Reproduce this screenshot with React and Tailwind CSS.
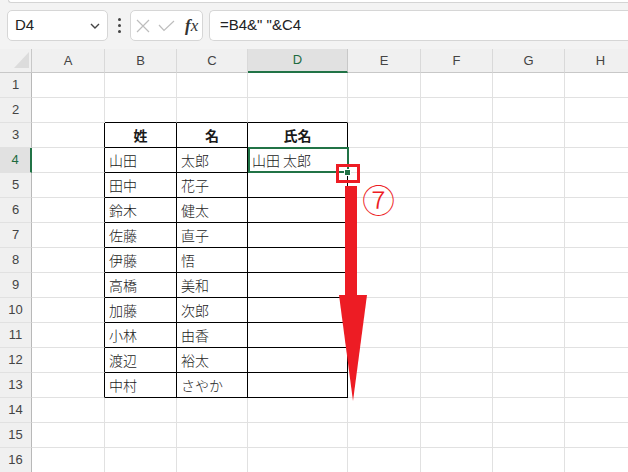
import React from 'react';

const cols = ['A', 'B', 'C', 'D', 'E', 'F', 'G', 'H'];
const data = {
  3: ['姓', '名', '氏名'],
  4: ['山田', '太郎', '山田 太郎'],
  5: ['田中', '花子', ''],
  6: ['鈴木', '健太', ''],
  7: ['佐藤', '直子', ''],
  8: ['伊藤', '悟', ''],
  9: ['高橋', '美和', ''],
  10: ['加藤', '次郎', ''],
  11: ['小林', '由香', ''],
  12: ['渡辺', '裕太', ''],
  13: ['中村', 'さやか', ''],
};

const jp = "font-['Noto_Sans_CJK_JP',sans-serif]";
const ui = "font-['Liberation_Sans','Noto_Sans',sans-serif]";

function Cell({ row, ci }) {
  const inTable = row >= 3 && row <= 13 && ci >= 1 && ci <= 3;
  const leftOfTable = row >= 3 && row <= 13 && ci === 0;
  const aboveTable = row === 2 && ci >= 1 && ci <= 3;
  const r = inTable || leftOfTable ? 'border-r-black' : 'border-r-[#e1e1e1]';
  const b = inTable || aboveTable ? 'border-b-black' : 'border-b-[#e1e1e1]';
  const text = inTable ? data[row][ci - 1] : '';
  const head = row === 3 && inTable;
  return (
    <div
      className={`h-[25px] border-r border-b ${r} ${b} flex items-center ${jp} text-[14px] text-[#1a1a1a] ${
        head ? 'justify-center font-bold' : 'pl-[4px] font-light'
      } overflow-hidden whitespace-nowrap`}
    >
      {text}
    </div>
  );
}

export default function App() {
  const rows = Array.from({ length: 16 }, (_, i) => i + 1);
  return (
    <div className="w-[628px] h-[472px] overflow-hidden bg-[#f3f3f3] relative">
      {/* top ribbon edge */}
      <div className="ml-[8px] h-[3px] bg-white border-b border-l border-[#d4d4d4] rounded-bl-[6px]" />

      {/* formula bar */}
      <div className="flex items-center h-[31px] mt-[7px] pl-[7px]">
        <div className="w-[101px] h-[31px] bg-white border border-[#d6d6d6] rounded-[5px] flex items-center justify-between pl-[7px] pr-[6px]">
          <span className={`${ui} text-[15px] text-[#222]`}>D4</span>
          <svg width="12" height="8" viewBox="0 0 12 8">
            <path d="M2 2 L6 6 L10 2" fill="none" stroke="#444" strokeWidth="1.4" />
          </svg>
        </div>
        <div className="w-[22px] flex flex-col items-center gap-[3px]">
          <span className="w-[3px] h-[3px] bg-[#444] rounded-full" />
          <span className="w-[3px] h-[3px] bg-[#444] rounded-full" />
          <span className="w-[3px] h-[3px] bg-[#444] rounded-full" />
        </div>
        <div className="w-[73px] h-[31px] bg-white border border-[#d6d6d6] rounded-[5px] flex items-center pl-[5px] gap-[8px]">
          <svg width="14" height="14" viewBox="0 0 14 14">
            <path d="M1 1 L13 13 M13 1 L1 13" stroke="#bdbdbd" strokeWidth="1.2" />
          </svg>
          <svg width="17" height="12" viewBox="0 0 17 12">
            <path d="M1 5 L6 10.5 L16 1" fill="none" stroke="#bdbdbd" strokeWidth="1.2" />
          </svg>
          <span className="font-['Liberation_Serif',serif] italic text-[17px] text-[#333] leading-none ml-[2px]">
            <span className="font-bold">f</span>x
          </span>
        </div>
        <div className="ml-[6px] flex-1 h-[31px] bg-white border border-[#d6d6d6] border-r-0 rounded-l-[5px] flex items-center pl-[10px]">
          <span className={`${ui} text-[15px] text-[#222]`}>=B4&amp;" "&amp;C4</span>
        </div>
      </div>

      {/* sheet */}
      <div className="mt-[8px] relative">
        <div className="grid grid-cols-[32px_73px_72px_71px_100px_73px_72px_72px_72px] w-[637px]">
          {/* header row */}
          <div className="h-[24px] bg-[#f0f0f0] border-r border-b border-[#c8c8c8] relative">
            <svg className="absolute left-[14px] top-[3px]" width="15" height="16" viewBox="0 0 15 16">
              <polygon points="15,0 15,16 0,16" fill="#dcdcdc" />
            </svg>
          </div>
          {cols.map((c) => (
            <div
              key={c}
              className={`h-[24px] flex items-center justify-center ${ui} text-[13px] ${
                c === 'D'
                  ? 'bg-[#e1e1e1] text-[#1e6b3f] border-b-2 border-b-[#217346] border-r border-r-[#c8c8c8]'
                  : 'bg-[#f0f0f0] text-[#444] border-r border-b border-[#d9d9d9] border-b-[#c8c8c8]'
              }`}
            >
              {c}
            </div>
          ))}

          {rows.map((row) => (
            <React.Fragment key={row}>
              <div
                className={`h-[25px] flex items-center justify-center ${ui} text-[13px] border-b border-b-[#e1e1e1] ${
                  row === 4
                    ? 'bg-[#e1e1e1] text-[#1e6b3f] border-r-2 border-r-[#217346]'
                    : 'bg-[#f0f0f0] text-[#444] border-r border-r-[#b8b8b8]'
                }`}
              >
                {row}
              </div>
              {cols.map((c, ci) => (
                <div key={c} className="bg-white">
                  <Cell row={row} ci={ci} />
                </div>
              ))}
            </React.Fragment>
          ))}
        </div>

        {/* selection D4 */}
        <div className="absolute left-[248px] top-[98px] w-[101px] h-[26px] border-2 border-[#217346] pointer-events-none" />
        <div className="absolute left-[344px] top-[120px] w-[7px] h-[7px] bg-[#217346] border border-white" />
        {/* red highlight square */}
        <div className="absolute left-[336px] top-[115px] w-[24px] h-[19px] border-[3px] border-[#ed1c24]" />
        {/* circled number */}
        <div className={`absolute left-[362px] top-[134px] text-[#ed1c24] text-[33px] leading-none font-light ${jp}`}>⑦</div>
        {/* arrow */}
        <svg className="absolute left-[336px] top-[136px]" width="34" height="220" viewBox="0 0 34 220">
          <rect x="9" y="1" width="12" height="110" fill="#ed1c24" />
          <polygon points="3,110 31,110 17,216" fill="#ed1c24" />
        </svg>
      </div>
    </div>
  );
}
